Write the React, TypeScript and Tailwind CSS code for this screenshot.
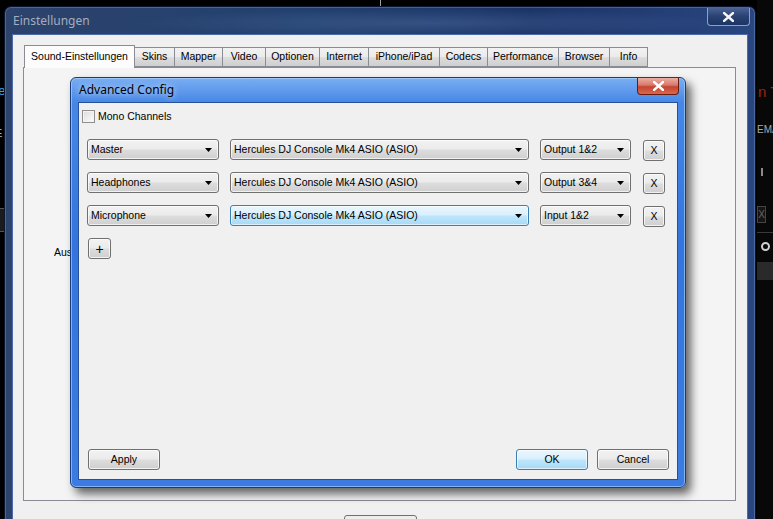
import React from 'react';

const font = "font-['Liberation_Sans',Arial,sans-serif]";
const uiFont = "font-['Noto_Sans','Open_Sans',sans-serif]";

const btnFace =
  'border border-[#707070] rounded-[3px] bg-[linear-gradient(#f2f2f2_0%,#ebebeb_48%,#dddddd_52%,#cfcfcf_100%)] shadow-[inset_0_0_0_1px_rgba(255,255,255,0.7)]';
const btnBlue =
  'border border-[#3c7fb1] rounded-[3px] bg-[linear-gradient(#eaf6fd_0%,#d9f0fc_48%,#bee6fd_52%,#a7d9f5_100%)] shadow-[inset_0_0_0_1px_rgba(255,255,255,0.6)]';

const Arrow = () => (
  <svg width="7" height="4" viewBox="0 0 7 4" className="shrink-0">
    <path d="M0 0h7L3.5 4z" fill="#000" />
  </svg>
);

const Combo: React.FC<{ label: string; width: string; active?: boolean }> = ({ label, width, active }) => (
  <div className={`${width} h-[21px] flex items-center justify-between pl-[3px] pr-[6px] ${active ? btnBlue : btnFace}`}>
    <span className="text-[10.5px] text-black leading-none whitespace-nowrap">{label}</span>
    <Arrow />
  </div>
);

const Button: React.FC<{ label: string; width: string; primary?: boolean; big?: boolean }> = ({ label, width, primary, big }) => (
  <div
    className={`${width} h-[21px] flex items-center justify-center ${big ? 'text-[14px]' : 'text-[10.5px]'} leading-none text-black ${primary ? btnBlue : btnFace}`}
  >
    {label}
  </div>
);

const tabs: { label: string; w: string }[] = [
  { label: 'Skins', w: 'w-[40px]' },
  { label: 'Mapper', w: 'w-[48px]' },
  { label: 'Video', w: 'w-[43px]' },
  { label: 'Optionen', w: 'w-[54px]' },
  { label: 'Internet', w: 'w-[49px]' },
  { label: 'iPhone/iPad', w: 'w-[71px]' },
  { label: 'Codecs', w: 'w-[48px]' },
  { label: 'Performance', w: 'w-[71px]' },
  { label: 'Browser', w: 'w-[51px]' },
  { label: 'Info', w: 'w-[38px]' },
];

const rows = [
  { channel: 'Master', port: 'Output 1&2' },
  { channel: 'Headphones', port: 'Output 3&4' },
  { channel: 'Microphone', port: 'Input 1&2', active: true },
];

const AdvancedConfig = () => (
  <div className="absolute left-[70px] top-[77px] w-[616px] h-[411px] flex flex-col px-[7px] pb-[7px] rounded-[6px] border border-[#1a3d7a] bg-[linear-gradient(180deg,#7aaef2_0%,#4687e6_6%,#3574dc_40%,#3c7ce0_100%)] shadow-[5px_6px_10px_rgba(0,0,0,0.6),inset_0_0_0_1px_rgba(180,215,255,0.6)]">
    {/* caption */}
    <div className="h-[24px] flex items-start justify-between">
      <span className={`${uiFont} text-[12px] text-black mt-[3px] ml-[1px] [text-shadow:0_0_6px_rgba(255,255,255,0.9)]`}>
        Advanced Config
      </span>
      <div className="-mr-[1px] w-[42px] h-[17px] rounded-b-[4px] border border-[#6b1a12] border-t-0 bg-[linear-gradient(#eab0a4_0%,#d9776a_45%,#c5432f_55%,#d86a4e_100%)] flex items-center justify-center">
        <svg width="11" height="10" viewBox="0 0 11 10">
          <path d="M1 1l9 8M10 1l-9 8" stroke="#fff" strokeWidth="2.4" strokeLinecap="square" />
        </svg>
      </div>
    </div>

    {/* client */}
    <div className={`${font} flex-1 flex flex-col border border-[#27509a] bg-[#f0f0f0] pt-[7px] pl-[3px] pb-[9px]`}>
      <div className="flex items-center gap-[3px] h-[13px]">
        <div className="w-[13px] h-[13px] border border-[#8f8f8f] bg-[linear-gradient(135deg,#dcdcdc,#fdfdfd)] shadow-[inset_0_0_0_1px_#f4f4f4]" />
        <span className="text-[10.5px] leading-none text-black">Mono Channels</span>
      </div>

      <div className="flex flex-col gap-[11px] mt-[16px] ml-[5px]">
        {rows.map((r) => (
          <div key={r.channel} className="flex items-start h-[22px]">
            <Combo label={r.channel} width="w-[132px]" />
            <div className="ml-[11px]">
              <Combo label="Hercules DJ Console Mk4 ASIO (ASIO)" width="w-[299px]" active={r.active} />
            </div>
            <div className="ml-[11px]">
              <Combo label={r.port} width="w-[91px]" />
            </div>
            <div className="ml-[12px] mt-[1px]">
              <Button label="X" width="w-[22px]" />
            </div>
          </div>
        ))}
      </div>

      <div className="mt-[11px] ml-[6px]">
        <Button label="+" width="w-[23px]" big />
      </div>

      <div className="mt-auto flex items-center pl-[6px] pr-[8px]">
        <Button label="Apply" width="w-[72px]" />
        <div className="ml-auto flex gap-[9px]">
          <Button label="OK" width="w-[72px]" primary />
          <Button label="Cancel" width="w-[72px]" />
        </div>
      </div>
    </div>
  </div>
);

const SettingsWindow = () => (
  <div className="absolute left-[4px] top-[6px] w-[752px] h-[540px] flex flex-col px-[7px] rounded-t-[7px] border border-[#0a1530] bg-[linear-gradient(90deg,#2c436c_0%,#22406f_40%,#1b3468_70%,#2a4680_100%)] shadow-[inset_0_0_0_1px_rgba(140,170,220,0.35)]">
    {/* caption */}
    <div className="h-[27px] flex items-start justify-between bg-[radial-gradient(ellipse_300px_14px_at_420px_16px,rgba(120,150,200,0.25),transparent)]">
      <span className={`${uiFont} text-[12px] text-[#a4aebe] mt-[5px] ml-[1px]`}>Einstellungen</span>
      <div className="mt-[1px] mr-[-2px] w-[43px] h-[18px] rounded-b-[4px] border border-[#8fa0c0] border-t-0 bg-[linear-gradient(#4a6294,#2a4272_50%,#1c3564_100%)] flex items-center justify-center">
        <svg width="11" height="10" viewBox="0 0 11 10">
          <path d="M1 1l9 8M10 1l-9 8" stroke="#f4f4f4" strokeWidth="2.4" strokeLinecap="square" />
        </svg>
      </div>
    </div>

    {/* client */}
    <div className={`${font} flex-1 flex flex-col border border-[#4b6aa6] bg-[#f0f0f0] pt-[9px] px-[10px]`}>
      <div className="flex items-end ml-[1px] h-[23px] relative z-10">
        <div className="w-[111px] h-[23px] -mb-px flex items-center justify-center border border-b-0 border-[#898c95] bg-[#fcfcfc] text-[10.5px] text-black">
          Sound-Einstellungen
        </div>
        {tabs.map((t) => (
          <div
            key={t.label}
            className={`${t.w} h-[20px] flex items-center justify-center border border-l-0 border-[#898c95] bg-[linear-gradient(#f2f2f2_0%,#ebebeb_48%,#dddddd_52%,#cfcfcf_100%)] text-[10.5px] text-black`}
          >
            {t.label}
          </div>
        ))}
      </div>
      <div className="w-[713px] h-[434px] border border-[#898c95] bg-[#f4f4f4] pl-[30px] pt-[171px]">
        <span className="text-[10.5px] text-black">Ausgabe:</span>
      </div>
      <div className="mt-[14px] ml-[321px] w-[73px] h-[22px] border border-[#707070] rounded-[3px] bg-[#ededed]" />
    </div>
  </div>
);

export default function App() {
  return (
    <div className="relative w-[773px] h-[519px] overflow-hidden bg-black">
      {/* app running behind the windows */}
      <div className="absolute left-[380px] top-0 w-px h-[6px] bg-[#9aa0a8]" />
      <div className={`${font} absolute left-0 top-[84px] w-[4px] h-[16px] overflow-hidden`}>
        <span className="block -ml-[6px] text-[13px] text-[#3aa6e8] leading-none">re</span>
      </div>
      <div className={`${font} absolute left-0 top-[128px] w-[4px] h-[14px] overflow-hidden`}>
        <span className="block -ml-[5px] text-[11px] text-[#bfbfbf] leading-none">E</span>
      </div>
      <div className="absolute left-0 top-[208px] w-[4px] h-[24px] border-y border-[#555] bg-[#1b1b1b]" />

      <div className={`${font} absolute left-[757px] top-0 w-[16px] h-[519px] overflow-hidden bg-[#080808]`}>
        <div className="absolute left-[1px] top-[84px] text-[15px] text-[#9c2219] leading-none whitespace-nowrap">n T</div>
        <div className="absolute left-0 top-[125px] text-[10px] text-[#a8a8a8] leading-none whitespace-nowrap">EMA</div>
        <div className="absolute left-[4px] top-[168px] w-[2px] h-[8px] bg-[#8a8a8a]" />
        <div className="absolute left-0 top-[206px] w-[9px] h-[17px] border border-[#444] bg-[#151515] text-[10px] text-[#666] flex items-center justify-center">X</div>
        <div className="absolute left-0 top-[232px] w-[16px] h-px bg-[#3a3a3a]" />
        <div className="absolute left-[4px] top-[242px] w-[9px] h-[9px] rounded-full border-2 border-[#cfcfcf]" />
        <div className="absolute left-0 top-[262px] w-[16px] h-[18px] bg-[#2a2a2a]" />
      </div>

      <SettingsWindow />
      <AdvancedConfig />
    </div>
  );
}
